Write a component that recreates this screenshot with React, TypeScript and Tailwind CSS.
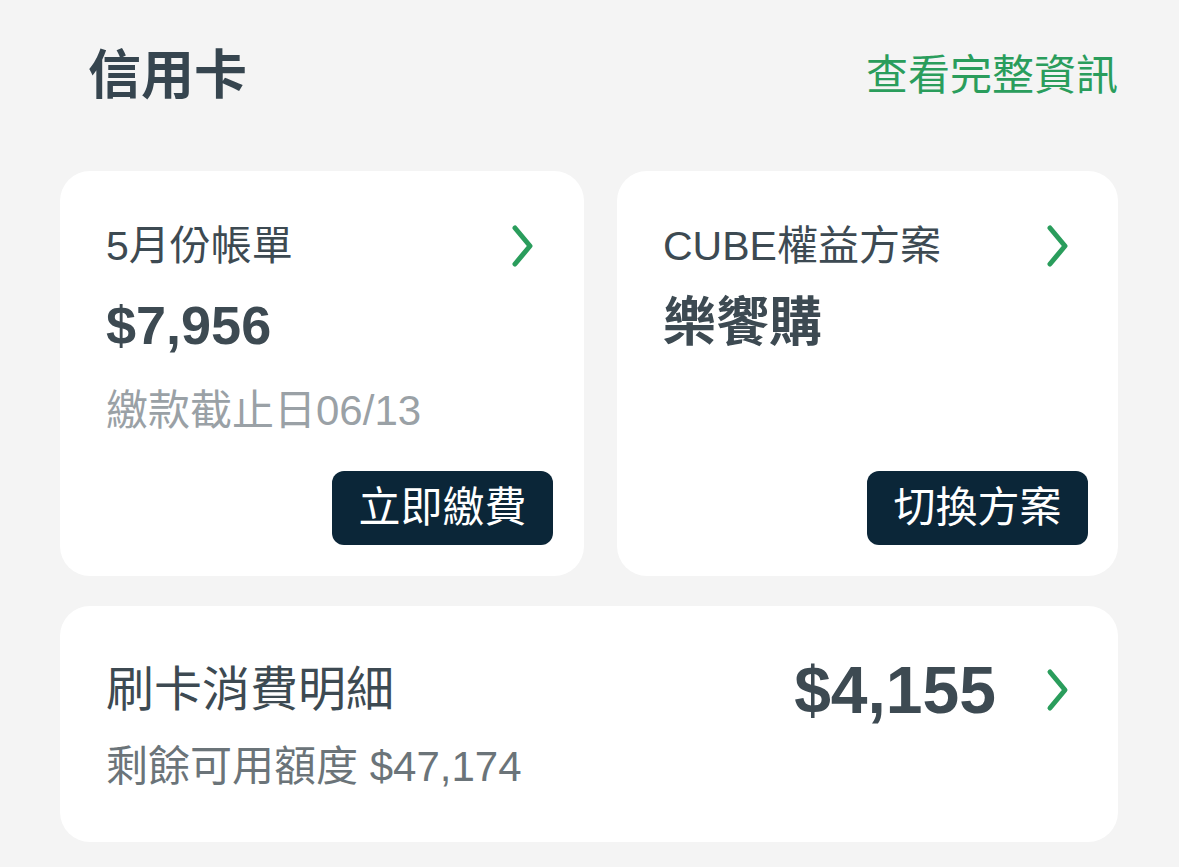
import React from 'react';

const font = { fontFamily: '"Liberation Sans", "Noto Sans CJK TC", sans-serif' };

const Chevron = ({ className = '' }: { className?: string }) => (
  <svg viewBox="0 0 24 44" className={className} fill="none">
    <path d="M4 4 L19 22 L4 40" stroke="#2a9d5c" strokeWidth="5" strokeLinecap="round" strokeLinejoin="round" />
  </svg>
);

const App = () => {
  return (
    <div className="w-[1179px] h-[867px] bg-[#f4f4f4] overflow-hidden" style={font}>
      <div className="px-[60px] pt-[44px]">
        <div className="flex items-center justify-between pl-[28px] pr-[1px] h-[64px]">
          <h1 className="text-[53px] leading-[64px] font-bold text-[#36454f]">信用卡</h1>
          <a className="text-[42px] leading-[64px] text-[#2a9d5c]">查看完整資訊</a>
        </div>

        <div className="mt-[63px] grid grid-cols-[524px_501px] gap-[33px]">
          <div className="h-[405px] bg-white rounded-[30px] flex flex-col pt-[50px] pl-[46px] pr-[31px] pb-[31px]">
            <div className="flex items-center justify-between pr-[18px]">
              <span className="text-[41px] leading-[50px] text-[#3d4a52]">5月份帳單</span>
              <Chevron className="w-[24px] h-[44px]" />
            </div>
            <div className="mt-[22px] text-[54px] leading-[64px] font-bold text-[#3d4a52]">$7,956</div>
            <div className="mt-[29px] text-[42px] leading-[50px] text-[#9aa1a6]">繳款截止日06/13</div>
            <button className="mt-auto self-end w-[221px] h-[74px] rounded-[12px] bg-[#0b2638] text-white text-[42px] leading-[74px]">立即繳費</button>
          </div>

          <div className="h-[405px] bg-white rounded-[30px] flex flex-col pt-[50px] pl-[46px] pr-[30px] pb-[31px]">
            <div className="flex items-center justify-between pr-[18px]">
              <span className="text-[41px] leading-[50px] text-[#3d4a52]">CUBE權益方案</span>
              <Chevron className="w-[24px] h-[44px]" />
            </div>
            <div className="mt-[20px] text-[53px] leading-[64px] font-bold text-[#3d4a52]">樂饗購</div>
            <button className="mt-auto self-end w-[221px] h-[74px] rounded-[12px] bg-[#0b2638] text-white text-[42px] leading-[74px]">切換方案</button>
          </div>
        </div>

        <div className="mt-[30px] w-[1058px] h-[236px] bg-white rounded-[30px] pt-[54px] pl-[46px] pr-[48px]">
          <div className="flex items-center justify-between">
            <span className="text-[48px] leading-[60px] text-[#3d4a52]">刷卡消費明細</span>
            <div className="flex items-center gap-[50px]">
              <span className="text-[66px] leading-[60px] font-bold text-[#3d4a52]">$4,155</span>
              <Chevron className="w-[24px] h-[44px]" />
            </div>
          </div>
          <div className="mt-[22px] text-[42px] leading-[50px] text-[#6b7479]">剩餘可用額度 $47,174</div>
        </div>
      </div>
    </div>
  );
};

export default App;
